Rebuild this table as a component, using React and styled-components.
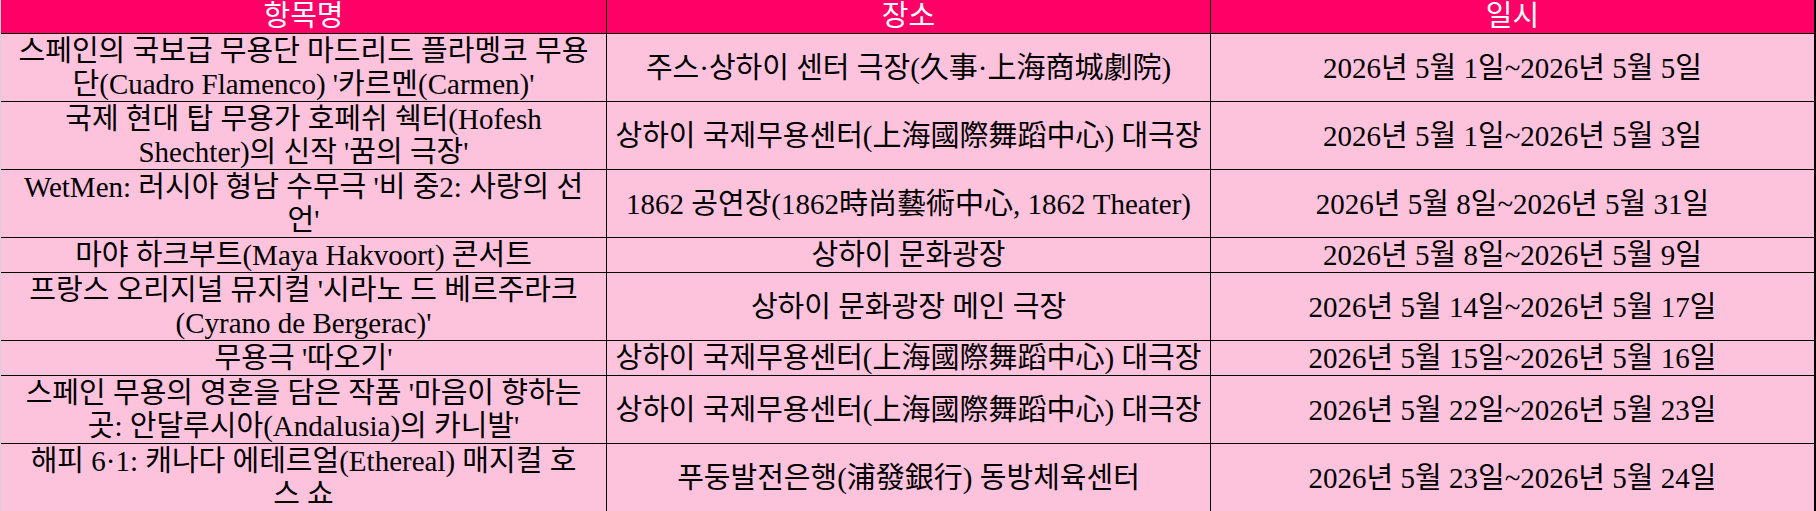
import styled, { createGlobalStyle } from "styled-components";

const GlobalStyle = createGlobalStyle`
  body {
    margin: 0;
    background: #ffffff;
  }
`;

const ROWS = [
  {
    title: ["스페인의 국보급 무용단 마드리드 플라멩코 무용", "단(Cuadro Flamenco) '카르멘(Carmen)'"],
    place: "주스·상하이 센터 극장(久事·上海商城劇院)",
    date: "2026년 5월 1일~2026년 5월 5일",
  },
  {
    title: ["국제 현대 탑 무용가 호페쉬 쉑터(Hofesh", "Shechter)의 신작 '꿈의 극장'"],
    place: "상하이 국제무용센터(上海國際舞蹈中心) 대극장",
    date: "2026년 5월 1일~2026년 5월 3일",
  },
  {
    title: ["WetMen: 러시아 형남 수무극 '비 중2: 사랑의 선", "언'"],
    place: "1862 공연장(1862時尚藝術中心, 1862 Theater)",
    date: "2026년 5월 8일~2026년 5월 31일",
  },
  {
    title: ["마야 하크부트(Maya Hakvoort) 콘서트"],
    place: "상하이 문화광장",
    date: "2026년 5월 8일~2026년 5월 9일",
  },
  {
    title: ["프랑스 오리지널 뮤지컬 '시라노 드 베르주라크", "(Cyrano de Bergerac)'"],
    place: "상하이 문화광장 메인 극장",
    date: "2026년 5월 14일~2026년 5월 17일",
  },
  {
    title: ["무용극 '따오기'"],
    place: "상하이 국제무용센터(上海國際舞蹈中心) 대극장",
    date: "2026년 5월 15일~2026년 5월 16일",
  },
  {
    title: ["스페인 무용의 영혼을 담은 작품 '마음이 향하는", "곳: 안달루시아(Andalusia)의 카니발'"],
    place: "상하이 국제무용센터(上海國際舞蹈中心) 대극장",
    date: "2026년 5월 22일~2026년 5월 23일",
  },
  {
    title: ["해피 6·1: 캐나다 에테르얼(Ethereal) 매지컬 호", "스 쇼"],
    place: "푸둥발전은행(浦發銀行) 동방체육센터",
    date: "2026년 5월 23일~2026년 5월 24일",
  },
];

const Table = styled.div`
  display: grid;
  grid-template-columns: 606px 604px 1fr;
  width: 1816px;
  box-sizing: border-box;
  border-left: 1px solid #d4d4d4;
  font-family: "Liberation Serif", "Noto Sans CJK KR", serif;
  font-size: 29px;
  line-height: 33px;
  color: #000000;
`;

const Cell = styled.div`
  display: flex;
  align-items: center;
  justify-content: center;
  text-align: center;
  box-sizing: border-box;
  padding: ${(p) => (p.$head ? "0 2px" : "1px 2px 0")};
  background: ${(p) => (p.$head ? "#ff0066" : "#fdc2dc")};
  color: ${(p) => (p.$head ? "#ffffff" : "#000000")};
  border-bottom: 1px solid #000000;
  border-right: ${(p) => (p.$last ? "2px" : "1px")} solid #000000;
  white-space: nowrap;
`;

const Lines = styled.span`
  display: block;
`;

export default function App() {
  return (
    <>
      <GlobalStyle />
      <Table>
        <Cell $head>항목명</Cell>
        <Cell $head>장소</Cell>
        <Cell $head $last>일시</Cell>
        {ROWS.map((row, i) => (
          <>
            <Cell key={"t" + i}>
              <Lines>
                {row.title.map((line, j) => (
                  <span key={j}>
                    {j > 0 && <br />}
                    {line}
                  </span>
                ))}
              </Lines>
            </Cell>
            <Cell key={"p" + i}>{row.place}</Cell>
            <Cell key={"d" + i} $last>
              {row.date}
            </Cell>
          </>
        ))}
      </Table>
    </>
  );
}
